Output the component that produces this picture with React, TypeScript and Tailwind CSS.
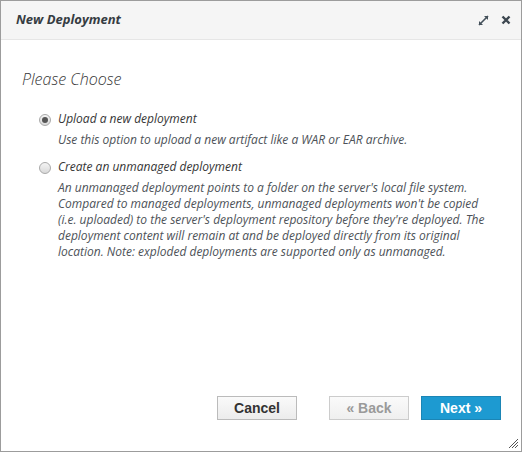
const options = [
  {
    label: 'Upload a new deployment',
    text: 'Use this option to upload a new artifact like a WAR or EAR archive.',
    checked: true,
  },
  {
    label: 'Create an unmanaged deployment',
    text: "An unmanaged deployment points to a folder on the server's local file system. Compared to managed deployments, unmanaged deployments won't be copied (i.e. uploaded) to the server's deployment repository before they're deployed. The deployment content will remain at and be deployed directly from its original location. Note: exploded deployments are supported only as unmanaged.",
    checked: false,
  },
];

function Radio({ checked }: { checked: boolean }) {
  return (
    <span className="mt-[3px] flex h-[12px] w-[12px] shrink-0 items-center justify-center rounded-full border border-[#a9a9a9] bg-gradient-to-b from-[#f4f4f4] to-[#d9d9d9]">
      {checked && <span className="h-[6px] w-[6px] rounded-full bg-[#555]" />}
    </span>
  );
}

export default function App() {
  return (
    <div
      className="flex h-[452px] w-[522px] flex-col border border-[#9c9c9c] bg-white"
      style={{ fontFamily: '"Open Sans", "Liberation Sans", sans-serif' }}
    >
      <div className="flex h-[39px] shrink-0 items-center justify-between border-b border-[#e6e6e6] bg-[#f5f5f5] pl-[15px] pr-[10px]">
        <h1 className="text-[13px] font-bold italic text-[#363c42]">New Deployment</h1>
        <div className="flex items-center gap-[12px]">
          <svg width="11" height="11" viewBox="0 0 11 11">
            <path d="M1 10 L10 1" stroke="#44505a" strokeWidth="1.6" />
            <path d="M6 1 H10 V5 Z" fill="#44505a" />
            <path d="M1 6 V10 H5 Z" fill="#44505a" />
          </svg>
          <svg width="10" height="10" viewBox="0 0 10 10">
            <path d="M1.5 1.5 L8.5 8.5 M8.5 1.5 L1.5 8.5" stroke="#3d4750" strokeWidth="2.4" />
          </svg>
        </div>
      </div>

      <div className="flex-1 pl-[21px] pt-[28px]">
        <h2 className="text-[16px] font-light italic leading-[22px] text-[#363636]">Please Choose</h2>
        <div className="mt-[21px] flex flex-col gap-[11px] pl-[17px] pr-[34px]">
          {options.map((o) => (
            <div key={o.label} className="flex gap-[7px]">
              <Radio checked={o.checked} />
              <div className="text-[12px] italic leading-[16px]">
                <div className="text-[#363636]">{o.label}</div>
                <p className="mt-[5px] text-[#4d5258]">{o.text}</p>
              </div>
            </div>
          ))}
        </div>
      </div>

      <div
        className="relative flex h-[55px] shrink-0 items-start justify-end gap-[12px] pr-[20px] text-[14px] font-bold"
        style={{ fontFamily: '"Liberation Sans", Arial, sans-serif' }}
      >
        <button className="mr-[20px] h-[24px] w-[80px] border border-[#bbb] bg-gradient-to-b from-[#fafafa] to-[#ececec] text-[#333]">
          Cancel
        </button>
        <button className="h-[24px] w-[80px] border border-[#ccc] bg-gradient-to-b from-[#fafafa] to-[#efefef] text-[#9a9a9a]">
          « Back
        </button>
        <button className="h-[24px] w-[80px] border border-[#1b85b5] bg-[#1d9ad1] text-white">Next »</button>
        <svg className="absolute bottom-[2px] right-[2px]" width="12" height="12" viewBox="0 0 12 12">
          <path d="M11 2 L2 11 M11 5 L5 11 M11 8 L8 11" stroke="#555" strokeWidth="1" />
        </svg>
      </div>
    </div>
  );
}
